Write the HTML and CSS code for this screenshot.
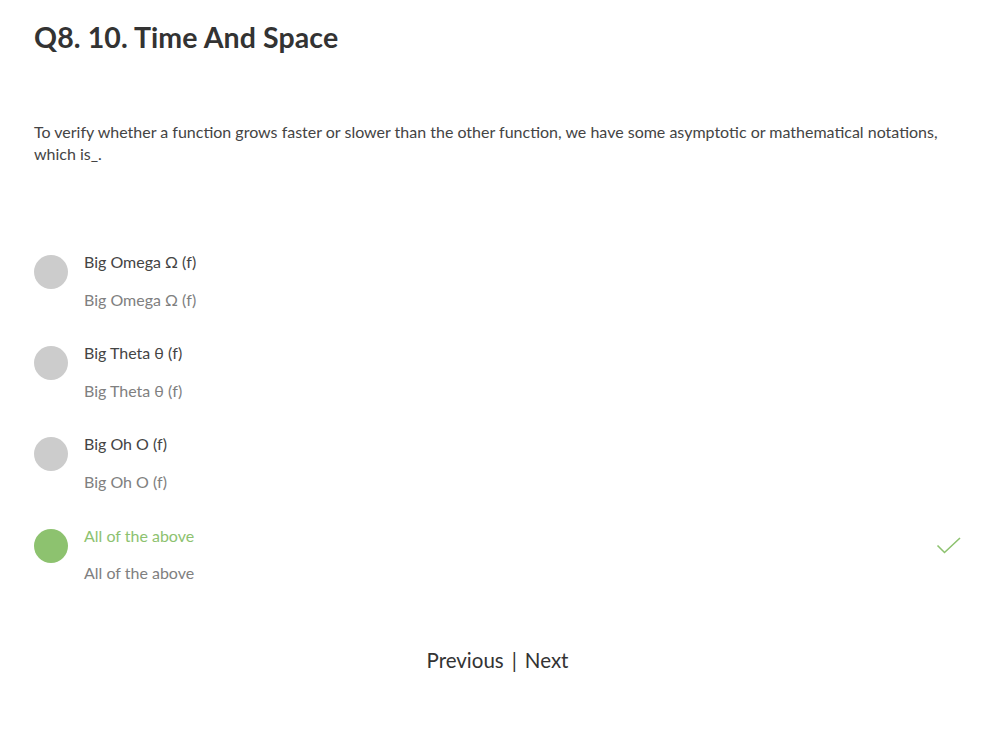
FILE: index.html
```html
<!DOCTYPE html>
<html>
<head>
<meta charset="utf-8">
<link rel="stylesheet" href="styles.css">
</head>
<body>
<div class="page">
  <h1 class="title">Q8. 10. Time And Space</h1>
  <p class="question">To verify whether a function grows faster or slower than the other function, we have some asymptotic or mathematical notations, which is_.</p>
  <div class="options">
    <div class="option">
      <span class="dot"></span>
      <div class="texts">
        <div class="opt-main">Big Omega Ω (f)</div>
        <div class="opt-sub">Big Omega Ω (f)</div>
      </div>
    </div>
    <div class="option">
      <span class="dot"></span>
      <div class="texts">
        <div class="opt-main">Big Theta θ (f)</div>
        <div class="opt-sub">Big Theta θ (f)</div>
      </div>
    </div>
    <div class="option">
      <span class="dot"></span>
      <div class="texts">
        <div class="opt-main">Big Oh O (f)</div>
        <div class="opt-sub">Big Oh O (f)</div>
      </div>
    </div>
    <div class="option correct">
      <span class="dot"></span>
      <div class="texts">
        <div class="opt-main">All of the above</div>
        <div class="opt-sub">All of the above</div>
      </div>
      <svg class="check" width="26" height="20" viewBox="0 0 26 20"><path d="M1.5 9.5 L8.5 16.5 L24 2" fill="none" stroke="#8dc26f" stroke-width="1.6"/></svg>
    </div>
  </div>
  <div class="nav">
    <span>Previous</span><span class="sep">|</span><span>Next</span>
  </div>
</div>
</body>
</html>
```
FILE: styles.css
```css
html, body {
  margin: 0;
  padding: 0;
  background: #fff;
}
body {
  font-family: "Lato", "Open Sans", sans-serif;
  color: #333;
}
.page {
  padding: 18px 32px 0 34px;
}
.title {
  margin: 0;
  font-size: 28.5px;
  font-weight: 700;
  line-height: 38px;
  color: #333;
  letter-spacing: 0.1px;
}
.question {
  margin: 65px 0 0 0;
  font-size: 16px;
  line-height: 22px;
  color: #444;
  max-width: 920px;
}
.options {
  margin-top: 87px;
  display: flex;
  flex-direction: column;
  gap: 33px;
}
.option {
  display: flex;
  align-items: flex-start;
  position: relative;
}
.dot {
  width: 34px;
  height: 34px;
  border-radius: 50%;
  background: #cccccc;
  margin-top: 3px;
  flex: none;
}
.texts {
  margin-left: 16px;
}
.opt-main {
  font-size: 16px;
  line-height: 20px;
  color: #444;
}
.opt-sub {
  font-size: 16px;
  line-height: 20px;
  margin-top: 18px;
  color: #808080;
}
.option.correct {
  margin-top: 1px;
}
.option.correct .dot {
  background: #8dc26f;
}
.option.correct .opt-main {
  color: #8dc26f;
}
.option.correct .opt-sub {
  margin-top: 17px;
}
.check {
  position: absolute;
  right: -1px;
  top: 10px;
}
.nav {
  margin-top: 65px;
  text-align: center;
  font-size: 20.5px;
  color: #333;
}
.sep {
  margin: 0 8px;
}
```
